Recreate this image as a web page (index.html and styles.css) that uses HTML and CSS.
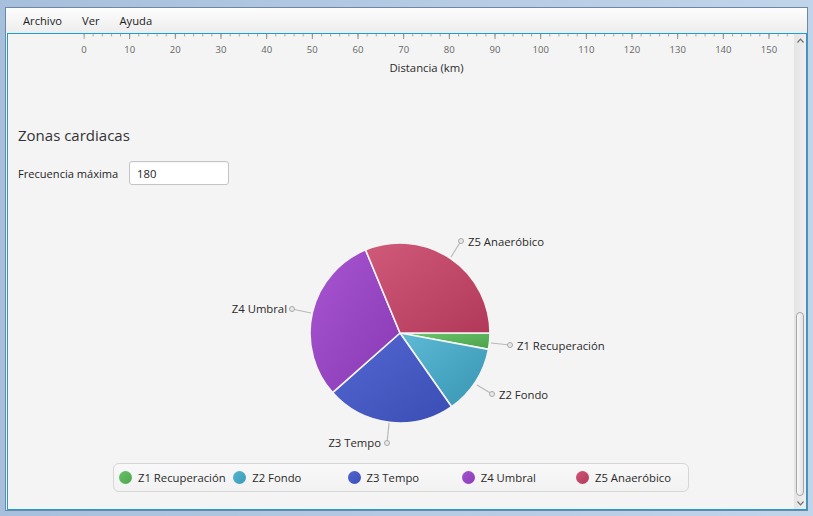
FILE: index.html
```html
<!DOCTYPE html>
<html lang="es">
<head>
<meta charset="utf-8">
<title>Zonas cardiacas</title>
<link rel="stylesheet" href="styles.css">
</head>
<body>
<div class="window">
  <div class="client">
    <nav class="menubar">
      <span class="menu">Archivo</span>
      <span class="menu">Ver</span>
      <span class="menu">Ayuda</span>
    </nav>
    <div class="content">
      <main class="main">
        <svg class="axis" width="785" height="78" viewBox="8 34 785 78">
          <defs>
            <pattern id="maj" x="83.5" y="34" width="45.6667" height="5" patternUnits="userSpaceOnUse">
              <rect width="1" height="5" fill="#8e8e8e"/>
            </pattern>
            <pattern id="min" x="83.5" y="34" width="9.13333" height="3" patternUnits="userSpaceOnUse">
              <rect width="1" height="2.5" fill="#a8a8a8"/>
            </pattern>
          </defs>
          <rect x="83.5" y="34" width="708" height="3" fill="url(#min)"/>
          <rect x="83.5" y="34" width="687" height="5" fill="url(#maj)"/>
          <g class="ticklbl">
            <text x="84" y="53">0</text>
            <text x="129.7" y="53">10</text>
            <text x="175.3" y="53">20</text>
            <text x="221" y="53">30</text>
            <text x="266.7" y="53">40</text>
            <text x="312.3" y="53">50</text>
            <text x="358" y="53">60</text>
            <text x="403.7" y="53">70</text>
            <text x="449.3" y="53">80</text>
            <text x="495" y="53">90</text>
            <text x="540.7" y="53">100</text>
            <text x="586.3" y="53">110</text>
            <text x="632" y="53">120</text>
            <text x="677.7" y="53">130</text>
            <text x="723.3" y="53">140</text>
            <text x="769" y="53">150</text>
          </g>
          <text class="axistitle" x="426.5" y="72">Distancia (km)</text>
        </svg>

        <section class="zones">
          <h2 class="title">Zonas cardiacas</h2>
          <div class="form-row">
            <label class="form-label" for="fmax">Frecuencia máxima</label>
            <input class="field" id="fmax" type="text" value="180">
          </div>
        </section>

        <svg class="pie" width="785" height="278" viewBox="8 185 785 278">
          <defs>
            <linearGradient id="g1" x1="0" y1="0" x2="1" y2="1"><stop offset="0" stop-color="#6dc56d"/><stop offset="1" stop-color="#4aa24a"/></linearGradient>
            <linearGradient id="g2" x1="0" y1="0" x2="1" y2="1"><stop offset="0" stop-color="#5ebad5"/><stop offset="1" stop-color="#3795b3"/></linearGradient>
            <linearGradient id="g3" x1="0" y1="0" x2="1" y2="1"><stop offset="0" stop-color="#5468d2"/><stop offset="1" stop-color="#3a4db4"/></linearGradient>
            <linearGradient id="g4" x1="0" y1="0" x2="1" y2="1"><stop offset="0" stop-color="#a855d2"/><stop offset="1" stop-color="#8839b3"/></linearGradient>
            <linearGradient id="g5" x1="0" y1="0" x2="1" y2="1"><stop offset="0" stop-color="#d05a79"/><stop offset="1" stop-color="#b13859"/></linearGradient>
          </defs>
          <g class="slices">
            <path fill="url(#g1)" d="M400 333 L490 333 A90 90 0 0 1 488.49 349.4 Z"/>
            <path fill="url(#g2)" d="M400 333 L488.49 349.4 A90 90 0 0 1 451.62 406.72 Z"/>
            <path fill="url(#g3)" d="M400 333 L451.62 406.72 A90 90 0 0 1 332.59 392.64 Z"/>
            <path fill="url(#g4)" d="M400 333 L332.59 392.64 A90 90 0 0 1 365.56 249.85 Z"/>
            <path fill="url(#g5)" d="M400 333 L365.56 249.85 A90 90 0 0 1 490 333 Z"/>
          </g>
          <g class="leaders">
            <line x1="451" y1="257" x2="461" y2="241"/><circle cx="461" cy="241" r="2.5"/>
            <line x1="311" y1="313" x2="292" y2="309"/><circle cx="292" cy="309" r="2.5"/>
            <line x1="491" y1="343" x2="510" y2="345"/><circle cx="510" cy="345" r="2.5"/>
            <line x1="477" y1="385" x2="492" y2="394"/><circle cx="492" cy="394" r="2.5"/>
            <line x1="389" y1="423" x2="387" y2="443"/><circle cx="387" cy="443" r="2.5"/>
          </g>
          <g class="lbl">
            <text x="468" y="246">Z5 Anaeróbico</text>
            <text x="287" y="313" text-anchor="end">Z4 Umbral</text>
            <text x="517" y="350">Z1 Recuperación</text>
            <text x="499" y="399">Z2 Fondo</text>
            <text x="381" y="447" text-anchor="end">Z3 Tempo</text>
          </g>
        </svg>

        <div class="legend">
          <div class="item"><span class="dot c1"></span>Z1 Recuperación</div>
          <div class="item"><span class="dot c2"></span>Z2 Fondo</div>
          <div class="item"><span class="dot c3"></span>Z3 Tempo</div>
          <div class="item"><span class="dot c4"></span>Z4 Umbral</div>
          <div class="item"><span class="dot c5"></span>Z5 Anaeróbico</div>
        </div>
      </main>
      <div class="scrollbar">
        <div class="arrow"><svg width="7" height="5" viewBox="0 0 7 5"><polyline points="0.5,4.5 3.5,1.2 6.5,4.5"/></svg></div>
        <div class="track"><div class="thumb"></div></div>
        <div class="arrow"><svg width="7" height="5" viewBox="0 0 7 5"><polyline points="0.5,0.5 3.5,3.8 6.5,0.5"/></svg></div>
      </div>
    </div>
  </div>
</div>
</body>
</html>
```
FILE: styles.css
```css
* { box-sizing: border-box; }
html, body { margin: 0; padding: 0; }
body {
  width: 813px;
  height: 516px;
  overflow: hidden;
  background: linear-gradient(to right, #a6bfdc, #b6cbe4 55%, #c0d4ea);
  font-family: "Open Sans", "Noto Sans", sans-serif;
  color: #333;
}
.window {
  height: 516px;
  padding: 7px 5px 5px 5px;
}
.client {
  height: 504px;
  border: 1px solid #6f87a3;
  background: #f4f4f4;
  display: flex;
  flex-direction: column;
}
.menubar {
  flex: none;
  height: 25px;
  display: flex;
  align-items: center;
  gap: 20px;
  padding-left: 17px;
  background: linear-gradient(#fdfdfd, #ededed);
  font-size: 11.2px;
  color: #1c1c1c;
}
.content {
  flex: 1;
  min-height: 0;
  display: flex;
  margin-left: 1px;
  border: 1px solid #1a9fd6;
  background: #f4f4f4;
}
.main {
  flex: 1;
  min-width: 0;
  display: flex;
  flex-direction: column;
}
.axis, .pie { display: block; flex: none; }
.ticklbl text {
  font-family: "Open Sans", sans-serif;
  font-size: 9.5px;
  fill: #666;
  text-anchor: middle;
}
.axistitle {
  font-family: "Open Sans", sans-serif;
  font-size: 11.3px;
  fill: #2a2a2a;
  text-anchor: middle;
}
.zones {
  padding-left: 10px;
}
.title {
  margin: 13px 0 0 0;
  font-size: 15px;
  line-height: 20px;
  font-weight: normal;
  color: #333;
}
.form-row {
  margin-top: 16px;
  height: 24px;
  display: flex;
  align-items: center;
}
.form-label {
  width: 101px;
  white-space: nowrap;
  font-size: 11.1px;
  color: #1e1e1e;
}
.field {
  margin: 0 0 0 10px;
  width: 100px;
  height: 24px;
  padding: 0 7px;
  border: 1px solid #c4c4c4;
  border-radius: 3px;
  background: #fff;
  box-shadow: inset 0 1px 1px rgba(0, 0, 0, 0.04);
  font-family: "Open Sans", sans-serif;
  font-size: 11.3px;
  color: #1e1e1e;
  outline: none;
}
.slices path {
  stroke: #f4f4f4;
  stroke-width: 1.6;
  stroke-linejoin: round;
}
.leaders line { stroke: #b9b9b9; stroke-width: 1.2; }
.leaders circle { fill: #e9e9e9; stroke: #a9a9a9; stroke-width: 1; }
.lbl text {
  font-family: "Open Sans", sans-serif;
  font-size: 11.3px;
  fill: #2a2a2a;
}
.legend {
  flex: none;
  width: 576px;
  height: 29px;
  margin: 0 auto;
  padding-left: 5px;
  border: 1px solid #d6d6d6;
  border-radius: 6px;
  background: linear-gradient(#f8f8f8, #f2f2f2);
  display: grid;
  grid-template-columns: repeat(5, 114.25px);
  align-items: center;
}
.item {
  display: flex;
  align-items: center;
  gap: 6px;
  white-space: nowrap;
  font-size: 11.3px;
  color: #2a2a2a;
}
.dot {
  width: 13px;
  height: 13px;
  border-radius: 50%;
  flex: none;
}
.c1 { background: linear-gradient(135deg, #68c068, #4ea64e); }
.c2 { background: linear-gradient(135deg, #56b4d0, #3a9ab8); }
.c3 { background: linear-gradient(135deg, #5064cf, #3c4fb8); }
.c4 { background: linear-gradient(135deg, #a552cf, #8c3cb8); }
.c5 { background: linear-gradient(135deg, #cf5676, #b33a5b); }
.scrollbar {
  flex: none;
  width: 12px;
  display: flex;
  flex-direction: column;
  background: linear-gradient(to right, #e4e4e4, #eeeeee);
}
.arrow {
  flex: none;
  height: 12px;
  display: flex;
  align-items: center;
  justify-content: center;
}
.arrow polyline {
  fill: none;
  stroke: #707070;
  stroke-width: 1.2;
}
.track {
  flex: 1;
  display: flex;
  flex-direction: column;
  justify-content: flex-end;
  padding: 0 2px 1px 2px;
}
.thumb {
  height: 184px;
  border: 1px solid #a7a7a7;
  border-radius: 5px;
  background: linear-gradient(to right, #f8f8f8, #e3e3e3);
}
```
